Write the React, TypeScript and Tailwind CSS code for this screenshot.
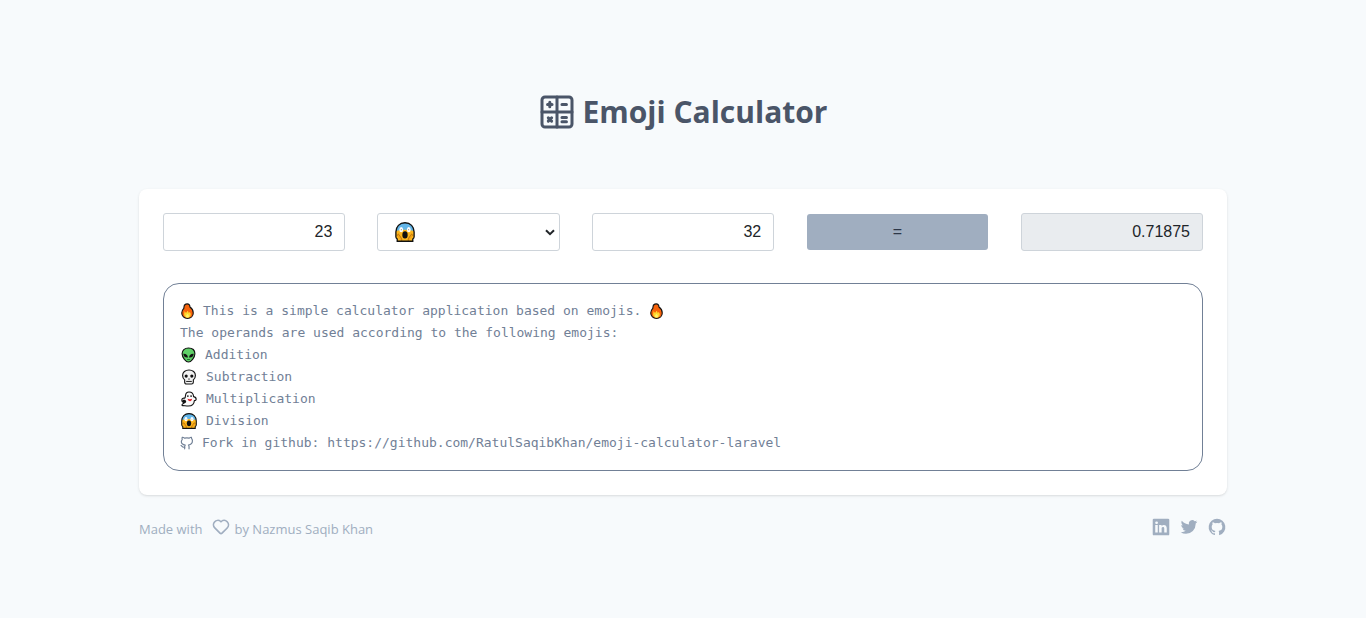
import { useState } from "react";
import type { ReactNode } from "react";

type IconProps = { className?: string };

function Glyph({ d, className }: { d: string; className?: string }) {
  return (
    <svg viewBox="0 0 24 24" fill="currentColor" aria-hidden="true" className={className}>
      <path d={d} />
    </svg>
  );
}

const heartPath =
  "M20.16,5A6.29,6.29,0,0,0,12,4.36a6.27,6.27,0,0,0-8.16,9.48l6.21,6.22a2.78,2.78,0,0,0,3.9,0l6.21-6.22A6.27,6.27,0,0,0,20.16,5Zm-1.41,7.46-6.21,6.21a.76.76,0,0,1-1.08,0L5.25,12.43a4.29,4.29,0,0,1,0-6,4.27,4.27,0,0,1,6,0,1,1,0,0,0,1.42,0,4.27,4.27,0,0,1,6,0A4.29,4.29,0,0,1,18.75,12.43Z";
const linkedinPath =
  "M20.47,2H3.53A1.45,1.45,0,0,0,2.06,3.43V20.57A1.45,1.45,0,0,0,3.53,22H20.47a1.45,1.45,0,0,0,1.47-1.43V3.43A1.45,1.45,0,0,0,20.47,2ZM8.09,18.74h-3v-9h3ZM6.59,8.48h0a1.56,1.56,0,1,1,0-3.12,1.57,1.57,0,1,1,0,3.12ZM18.91,18.74h-3V13.91c0-1.21-.43-2-1.52-2A1.65,1.65,0,0,0,12.85,13a2,2,0,0,0-.1.73v5h-3s0-8.18,0-9h3V11A3,3,0,0,1,15.46,9.5c2,0,3.45,1.29,3.45,4.06Z";
const twitterPath =
  "M22,5.8a8.49,8.49,0,0,1-2.36.64,4.13,4.13,0,0,0,1.81-2.27,8.21,8.21,0,0,1-2.61,1,4.1,4.1,0,0,0-7,3.74A11.64,11.64,0,0,1,3.39,4.62a4.16,4.16,0,0,0-.55,2.07A4.09,4.09,0,0,0,4.66,10.1,4.05,4.05,0,0,1,2.8,9.59v.05a4.1,4.1,0,0,0,3.3,4A3.93,3.93,0,0,1,5,13.81a4.9,4.9,0,0,1-.77-.07,4.11,4.11,0,0,0,3.83,2.84A8.22,8.22,0,0,1,3,18.34a7.93,7.93,0,0,1-1-.06,11.57,11.57,0,0,0,6.29,1.85A11.59,11.59,0,0,0,20,8.45c0-.17,0-.35,0-.53A8.43,8.43,0,0,0,22,5.8Z";
const githubPath =
  "M12,2.2467A10.00042,10.00042,0,0,0,8.83752,21.73419c.5.08752.6875-.21247.6875-.475,0-.23749-.01251-1.025-.01251-1.86249C7,19.85919,6.35,18.78423,6.15,18.22173A3.636,3.636,0,0,0,5.125,16.8092c-.35-.1875-.85-.65-.01251-.66248A2.00117,2.00117,0,0,1,6.65,17.17169a2.13742,2.13742,0,0,0,2.91248.825A2.10376,2.10376,0,0,1,10.2,16.65923c-2.225-.25-4.55-1.11254-4.55-4.9375a3.89187,3.89187,0,0,1,1.025-2.6875,3.59373,3.59373,0,0,1,.1-2.65s.83747-.26251,2.75,1.025a9.42747,9.42747,0,0,1,5,0c1.91248-1.3,2.75-1.025,2.75-1.025a3.59323,3.59323,0,0,1,.1,2.65,3.869,3.869,0,0,1,1.025,2.6875c0,3.83747-2.33752,4.6875-4.5625,4.9375a2.36814,2.36814,0,0,1,.675,1.85c0,1.33752-.01251,2.41248-.01251,2.75,0,.26251.1875.575.6875.475A10.0053,10.0053,0,0,0,12,2.2467Z";

function CalculatorIcon({ className }: IconProps) {
  return (
    <svg viewBox="0 0 24 24" fill="none" stroke="currentColor" strokeWidth="2" strokeLinecap="round" aria-hidden="true" className={className}>
      <rect x="2" y="2" width="20" height="20" rx="2" />
      <path d="M12 2v20M2 12h20" />
      <path d="M5.700 7h3M7.200 5.500v3M15.300 7h3M6.200 15.900l2.200 2.200M8.400 15.900l-2.200 2.200M15.300 15.700h3M15.300 18.500h3" />
    </svg>
  );
}

function GithubOutline({ className }: IconProps) {
  return (
    <svg viewBox="0 0 24 24" fill="none" stroke="currentColor" strokeWidth="2" strokeLinecap="round" strokeLinejoin="round" aria-hidden="true" className={className}>
      <path d="M15.500 22v-3.500c.1-1.200-.3-2.200-1-3 3.300-.4 6.800-1.700 6.800-7.300a5.700 5.700 0 0 0-1.600-4 5.300 5.300 0 0 0-.1-2s-1.300-.4-4.100 1.500a14 14 0 0 0-7.500 0C5.200 1.800 3.900 2.200 3.900 2.200a5.300 5.300 0 0 0-.1 3.900 5.700 5.700 0 0 0-1.500 3.900c0 4.100 3.400 5.200 6.700 5.600-.7.700-1 1.700-1 2.900V22" />
      <path d="M8 19c-4.500 1.500-4-2.200-6.300-2.700" />
    </svg>
  );
}

function Fire({ className }: IconProps) {
  return (
    <svg viewBox="0 0 14 17" role="img" aria-label="Fire" className={className}>
      <path d="M5.200 1.200C8.500.3 9.600 2 9.600 4.200c1.800 1.300 3.500 3.600 3.500 6.300 0 3.500-2.600 5.800-6.100 5.800S.9 14 .9 10.700c0-2.300 1.100-3.900 2.300-5.200C3 3.400 3.800 1.700 5.200 1.200Z" fill="#f7630c" stroke="#111" strokeWidth="1.200" strokeLinejoin="round" />
      <path d="M4 8.500c.4 1 .8 1.600 1.500 1.900.7-.6 1.100-1.100 1.400-2.100.9.700 1.200 1.500 1.300 2.200.6-.2.900-.5 1.200-1 .7.900 1.100 1.800 1.100 2.800 0 2.100-1.500 3.400-3.500 3.400s-3.600-1.300-3.600-3.400c0-1.300.4-2.500.6-3.800Z" fill="#ffd72e" />
      <path d="M7 11.500c.5 1 1.600 1.300 1.600 2.500 0 .9-.7 1.400-1.600 1.400S5.400 14.900 5.400 14c0-1.200 1.200-1.500 1.600-2.500Z" fill="#fff36b" />
    </svg>
  );
}

function Alien({ className }: IconProps) {
  return (
    <svg viewBox="0 0 16 17" role="img" aria-label="Alien" className={className}>
      <path d="M8 1c4.200 0 6.800 2.500 6.800 6.200 0 3.900-4.200 8.800-6.800 8.800S1.200 11.100 1.200 7.200C1.200 3.500 3.800 1 8 1Z" fill="#5fd068" stroke="#111" strokeWidth="1.200" />
      <path d="M2.500 7.200c2.700-.3 4.600 1.100 4.900 3.900-2.800.4-4.900-1-4.900-3.900ZM13.500 7.200c-2.700-.3-4.600 1.100-4.900 3.900 2.800.4 4.900-1 4.900-3.900Z" fill="#111" />
      <path d="M6.500 13.300h3" stroke="#166b29" strokeWidth="1" />
    </svg>
  );
}

function Skull({ className }: IconProps) {
  return (
    <svg viewBox="0 0 16 17" role="img" aria-label="Skull" className={className}>
      <path d="M8 1c4 0 6.800 2.400 6.800 6 0 2-.7 3.500-2.200 4.600V14c0 1.300-.8 2-2 2H5.400c-1.200 0-2-.7-2-2v-2.400C1.900 10.500 1.200 9 1.200 7c0-3.600 2.800-6 6.800-6Z" fill="#f2f2f2" stroke="#111" strokeWidth="1.200" />
      <circle cx="5" cy="7.500" r="1.700" fill="#111" />
      <circle cx="11" cy="7.500" r="1.700" fill="#111" />
      <path d="m8 9.500-1 1.700h2Z" fill="#111" />
      <path d="M5 13.200h6" stroke="#111" strokeWidth="1" />
    </svg>
  );
}

function Ghost({ className }: IconProps) {
  return (
    <svg viewBox="0 0 17 17" role="img" aria-label="Ghost" className={className}>
      <path d="M8.500 1c3.100 0 4.700 2 4.900 5 1.400.3 2.700 1.300 2.700 2.700 0 1-.8 1.500-1.900 1.400-.2 3.600-2.800 5.900-6.400 5.900-2.600 0-4.200-.5-6-.5-.9 0-1-1-.3-1.500.9-.7 1.400-1.100 1.800-1.900C1.900 11.900.9 11 .9 9.500c0-1.500 1.300-2.200 2.900-1.800C4.600 7.100 4.700 6 4.800 4.700 5 2.400 6.300 1 8.500 1Z" fill="#fafafa" stroke="#111" strokeWidth="1.200" strokeLinejoin="round" />
      <path d="M1.500 9.800c1.900-1.100 3.800-.3 4 1.300.1 1-.9 1.900-2.700 2.300Z" fill="#111" />
      <circle cx="7.300" cy="5.400" r=".9" fill="#111" />
      <circle cx="10.700" cy="5.400" r=".9" fill="#111" />
      <path d="M7 8.300c1.700.5 3.300.5 4.800 0-.2 1.400-1 2.700-2.200 2.700-1.300 0-2.400-1.300-2.600-2.700Z" fill="#e8252f" />
    </svg>
  );
}

function Scream({ className }: IconProps) {
  return (
    <svg viewBox="0 0 18 18" role="img" aria-label="Screaming face" className={className}>
      <path d="M9 .7c4.900 0 8.200 3.500 8.200 8.300v4.300c0 1-.5 1.600-1.200 2v2H2v-2c-.7-.4-1.200-1-1.200-2V9C.8 4.200 4.100.7 9 .7Z" fill="#fdb61d" />
      <path d="M9 .7c4.600 0 7.600 3 8.100 7.300-5-1.500-11.200-1.500-16.200 0C1.400 3.700 4.400.7 9 .7Z" fill="#62b5e8" />
      <path d="M2 12.500c.2-1.400.9-2 1.500-1.300l2.300 3.500c.4.800.4 1.700.2 2.600M16 12.500c-.2-1.400-.9-2-1.500-1.300l-2.300 3.500c-.4.800-.4 1.700-.2 2.600" fill="#f5a313" stroke="#a95f04" strokeWidth=".6" />
      <ellipse cx="5.600" cy="6.900" rx="1.700" ry="2.300" fill="#fff" />
      <ellipse cx="12.400" cy="6.900" rx="1.700" ry="2.300" fill="#fff" />
      <circle cx="5.700" cy="6.900" r=".5" fill="#888" />
      <circle cx="12.300" cy="6.900" r=".5" fill="#888" />
      <ellipse cx="9" cy="11.600" rx="2.400" ry="3.200" fill="#111" />
      <path d="M9 .7c4.900 0 8.200 3.500 8.200 8.300v4.300c0 1-.5 1.600-1.200 2v2H2v-2c-.7-.4-1.200-1-1.200-2V9C.8 4.200 4.100.7 9 .7Z" fill="none" stroke="#111" strokeWidth="1.200" />
    </svg>
  );
}

const operators = [
  { emoji: "👽", Icon: Alien, apply: (a: number, b: number) => a + b },
  { emoji: "💀", Icon: Skull, apply: (a: number, b: number) => a - b },
  { emoji: "👻", Icon: Ghost, apply: (a: number, b: number) => a * b },
  { emoji: "😱", Icon: Scream, apply: (a: number, b: number) => a / b },
];

const fieldClass =
  "h-[38px] w-full min-w-0 rounded-[3px] border border-[#ced4da] px-3 text-right text-base text-[#212529]";

function Line({ icon, children }: { icon?: ReactNode; children: ReactNode }) {
  return (
    <p className="flex items-center gap-2">
      {icon}
      {children}
    </p>
  );
}

export default function App() {
  const [first, setFirst] = useState("23");
  const [second, setSecond] = useState("32");
  const [op, setOp] = useState(3);
  const [result, setResult] = useState("0.71875");
  const Selected = operators[op].Icon;

  return (
    <div className="min-h-screen bg-[#f7fafc] font-['Open_Sans',sans-serif]">
      <main className="mx-auto max-w-6xl px-8 pt-[88px] pb-16">
        <h1 className="flex items-center justify-center gap-2 text-[30px] leading-[48px] font-bold text-[#4a5568]">
          <CalculatorIcon className="size-9" />
          Emoji Calculator
        </h1>

        <section className="mt-[53px] rounded-lg bg-white p-6 shadow">
          <form
            className="grid grid-cols-5 items-center gap-8 font-['Liberation_Sans',sans-serif]"
            onSubmit={(e) => {
              e.preventDefault();
              setResult(String(operators[op].apply(Number(first), Number(second))));
            }}
          >
            <input aria-label="First operand" inputMode="decimal" className={fieldClass} value={first} onChange={(e) => setFirst(e.target.value)} />
            <div className="relative">
              <select
                aria-label="Operator"
                className="h-[38px] w-full appearance-none rounded-[3px] border border-[#ced4da] bg-white px-3 text-transparent"
                value={op}
                onChange={(e) => setOp(Number(e.target.value))}
              >
                {operators.map(({ emoji }, i) => (
                  <option key={emoji} value={i} className="text-black">
                    {emoji}
                  </option>
                ))}
              </select>
              <span className="pointer-events-none absolute inset-y-0 right-[5px] left-[18px] flex items-center justify-between">
                <Selected className="size-5" />
                <svg viewBox="0 0 10 7" fill="none" stroke="#212529" strokeWidth="2" aria-hidden="true" className="h-[7px] w-[10px]">
                  <path d="m1 1.200 4 4 4-4" />
                </svg>
              </span>
            </div>
            <input aria-label="Second operand" inputMode="decimal" className={fieldClass} value={second} onChange={(e) => setSecond(e.target.value)} />
            <button type="submit" className="mx-px h-9 rounded-[3px] bg-[#a0aec0] text-base text-[#2d3748]">
              =
            </button>
            <input aria-label="Result" readOnly className={`${fieldClass} bg-[#e9ecef]`} value={result} />
          </form>

          <div className="mt-8 rounded-2xl border border-[#718096] p-4 font-['DejaVu_Sans_Mono',monospace] text-[13px] leading-[22px] text-[#718096]">
            <Line icon={<Fire className="h-4 w-[15px]" />}>
              This is a simple calculator application based on emojis.
              <Fire className="h-4 w-[15px]" />
            </Line>
            <Line>The operands are used according to the following emojis:</Line>
            <Line icon={<Alien className="h-4 w-[17px]" />}>Addition</Line>
            <Line icon={<Skull className="h-4 w-[18px]" />}>Subtraction</Line>
            <Line icon={<Ghost className="h-4 w-[18px]" />}>Multiplication</Line>
            <Line icon={<Scream className="h-4 w-[18px]" />}>Division</Line>
            <Line icon={<GithubOutline className="size-[14px]" />}>
              Fork in github: https://github.com/RatulSaqibKhan/emoji-calculator-laravel
            </Line>
          </div>
        </section>

        <footer className="mt-[22px] flex items-start justify-between text-[#a0aec0]">
          <p className="flex items-start gap-1 text-[13px] leading-6">
            <span>Made with</span>
            <Glyph d={heartPath} className="ml-1 size-5" />
            <span>by Nazmus Saqib Khan</span>
          </p>
          <nav className="flex gap-2">
            <a href="#linkedin" aria-label="LinkedIn">
              <Glyph d={linkedinPath} className="size-5" />
            </a>
            <a href="#twitter" aria-label="Twitter">
              <Glyph d={twitterPath} className="size-5" />
            </a>
            <a href="#github" aria-label="GitHub">
              <Glyph d={githubPath} className="size-5" />
            </a>
          </nav>
        </footer>
      </main>
    </div>
  );
}
